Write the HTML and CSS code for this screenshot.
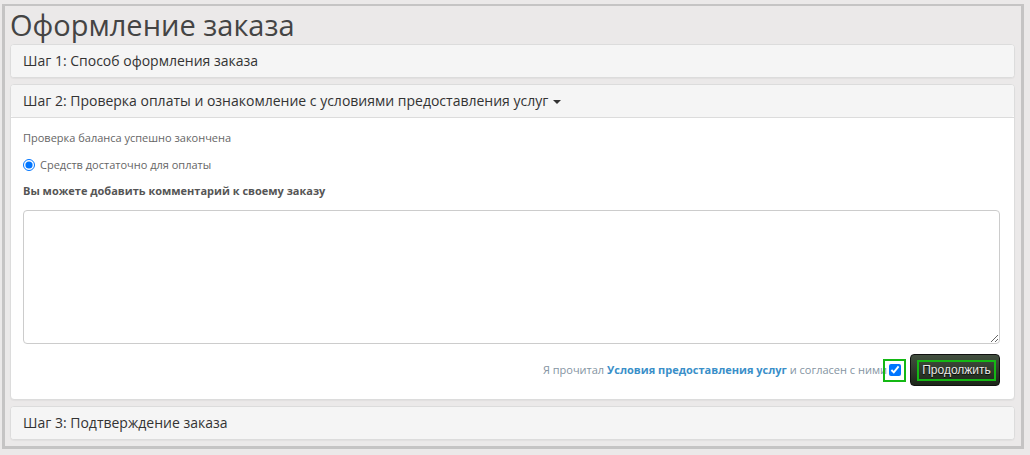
FILE: index.html
```html
<!DOCTYPE html>
<html lang="ru">
<head>
    <meta charset="UTF-8">
    <title>Оформление заказа</title>
    <link rel="stylesheet" href="styles.css">
</head>
<body>
    <div class="frame">
        <h1 class="page-title">Оформление заказа</h1>

        <div class="panel">
            <div class="panel-heading">Шаг 1: Способ оформления заказа</div>
        </div>

        <div class="panel">
            <div class="panel-heading">Шаг 2: Проверка оплаты и ознакомление с условиями предоставления услуг <span class="caret"></span></div>
            <div class="panel-body">
                <p class="note">Проверка баланса успешно закончена</p>
                <label class="radio-row"><input type="radio" checked> Средств достаточно для оплаты</label>
                <p class="comment-label">Вы можете добавить комментарий к своему заказу</p>
                <textarea class="comment"></textarea>
                <div class="agree-row">
                    <span class="agree-text">Я прочитал <a href="#">Условия предоставления услуг</a> и согласен с ними</span>
                    <span class="check-box"><input type="checkbox" checked></span>
                    <button class="btn-next"><span>Продолжить</span></button>
                </div>
            </div>
        </div>

        <div class="panel">
            <div class="panel-heading">Шаг 3: Подтверждение заказа</div>
        </div>
    </div>
</body>
</html>
```

FILE: styles.css
```css
body {
    margin: 0;
    padding: 4px 6px 6px 2px;
    background: #ebe9e9;
    font-family: 'Open Sans', 'Liberation Sans', sans-serif;
    color: #333;
}
.frame {
    border: 3px solid #c5c4c4;
    border-top-width: 2px;
    padding: 0 6px 6px 5px;
    height: 445px;
    box-sizing: border-box;
}
.page-title {
    margin: 0;
    font-size: 29px;
    font-weight: normal;
    line-height: 38px;
    color: #444;
    height: 38px;
}
.panel {
    background: #fff;
    border: 1px solid #dcdcdc;
    border-radius: 4px;
    margin-bottom: 6px;
    box-shadow: 0 1px 1px rgba(0, 0, 0, 0.04);
}
.panel-heading {
    background: #f5f5f5;
    padding: 7px 12px;
    font-size: 14px;
    line-height: 18px;
    color: #333;
    border-radius: 3px;
}
.panel-body {
    border-top: 1px solid #dcdcdc;
    padding: 12px 14px 13px 12px;
    font-size: 11px;
}
.caret {
    display: inline-block;
    width: 0;
    height: 0;
    border-left: 4px solid transparent;
    border-right: 4px solid transparent;
    border-top: 4px solid #333;
    vertical-align: middle;
    margin-left: 1px;
}
.note {
    margin: 0;
    line-height: 16px;
    color: #666;
}
.radio-row {
    display: flex;
    align-items: center;
    gap: 5px;
    margin-top: 11px;
    line-height: 16px;
    color: #666;
}
.radio-row input {
    margin: 0;
    width: 12px;
    height: 12px;
}
.comment-label {
    margin: 10px 0 0;
    font-weight: bold;
    color: #555;
    line-height: 16px;
}
.comment {
    display: block;
    width: 100%;
    box-sizing: border-box;
    height: 134px;
    margin-top: 11px;
    border: 1px solid #ccc;
    border-radius: 4px;
    resize: vertical;
}
.agree-row {
    display: flex;
    justify-content: flex-end;
    align-items: center;
    margin-top: 10px;
}
.agree-text {
    color: #8594a2;
    line-height: 16px;
}
.agree-text a {
    color: #3a8fc9;
    font-weight: bold;
    text-decoration: none;
}
.check-box {
    display: flex;
    align-items: center;
    justify-content: center;
    width: 19px;
    height: 19px;
    border: 2px solid #14b814;
    margin-left: -4px;
}
.check-box input {
    margin: 0;
    width: 12px;
    height: 12px;
}
.btn-next {
    margin-left: 4px;
    width: 90px;
    height: 32px;
    padding: 0 0 0 3px;
    border: 1px solid #111;
    border-radius: 4px;
    background: linear-gradient(#435040, #1c2619);
    color: #e8e8e8;
    font-family: 'Liberation Sans', Arial, sans-serif;
    font-size: 12px;
    display: flex;
    align-items: center;
    justify-content: center;
    text-shadow: 0 1px 1px #000;
}
.btn-next span {
    border: 2px solid #14b814;
    padding: 2px 3px;
    width: 69px;
    line-height: 13px;
    text-align: center;
    white-space: nowrap;
}
```
